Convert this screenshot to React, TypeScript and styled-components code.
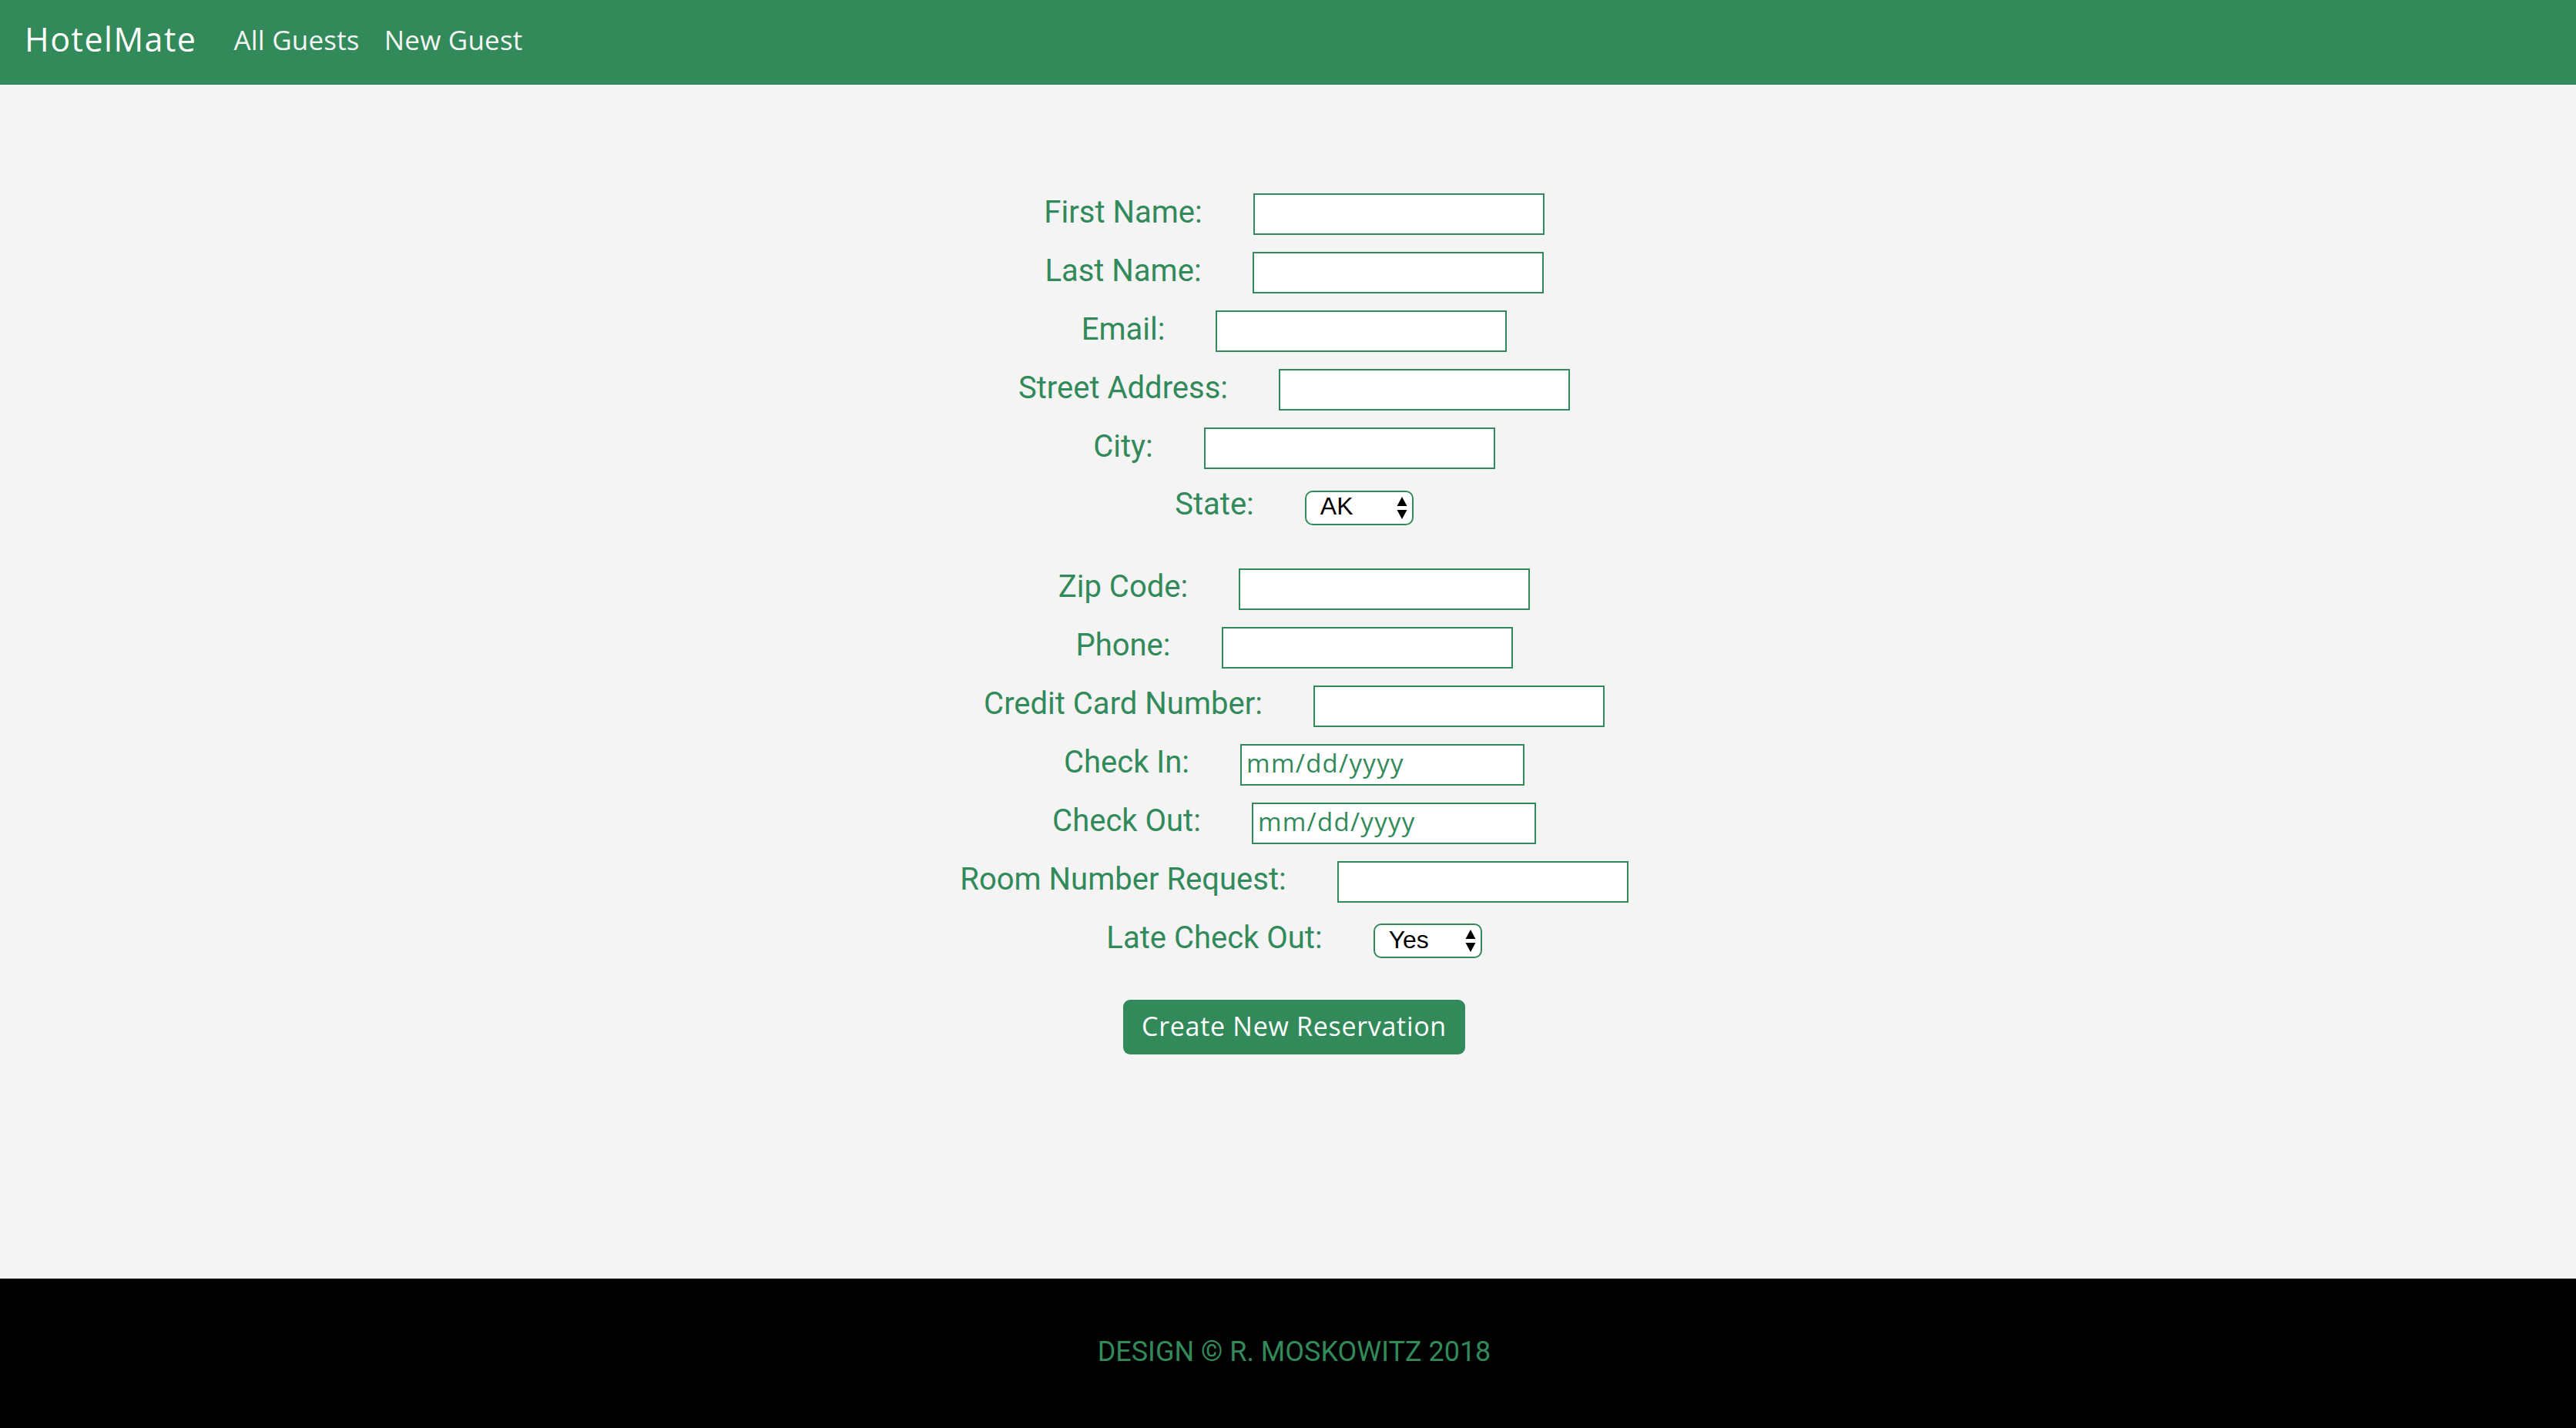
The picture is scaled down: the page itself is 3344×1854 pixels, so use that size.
import React from "react";
import styled, { createGlobalStyle } from "styled-components";

const GREEN = "#328a5a";

const GlobalStyle = createGlobalStyle`
  html, body { margin: 0; padding: 0; background: #f4f4f4; }
  body { font-family: "Open Sans", "Noto Sans", sans-serif; }
  * { box-sizing: border-box; }
`;

const Page = styled.div`
  min-height: 100vh;
  display: flex;
  flex-direction: column;
  background: #f4f4f4;
`;

const NavBar = styled.nav`
  height: 110px;
  background: ${GREEN};
  display: flex;
  align-items: center;
  padding: 0 32px;
`;

const Brand = styled.a`
  font-family: "Open Sans", sans-serif;
  font-size: 43px;
  letter-spacing: 1.5px;
  color: #ffffff;
  text-decoration: none;
  margin-right: 32px;
  line-height: 1;
  padding-bottom: 10px;
`;

const NavLink = styled.a`
  font-family: "Open Sans", sans-serif;
  font-size: 35px;
  letter-spacing: 0.2px;
  color: #f4f4f4;
  text-decoration: none;
  padding: 0 16px 8px;
  line-height: 1;
`;

const Main = styled.main`
  flex: 1;
  padding: 141px 0 0 16px;
`;

const Form = styled.form`
  display: flex;
  flex-direction: column;
  gap: 22px;
`;

const Row = styled.div<{ $after?: number }>`
  display: flex;
  justify-content: center;
  align-items: baseline;
  gap: 66px;
  margin-bottom: ${(p) => p.$after ?? 0}px;
`;

const Label = styled.label`
  font-family: Roboto, sans-serif;
  font-size: 40px;
  color: ${GREEN};
  line-height: normal;
`;

const TextInput = styled.input<{ $w?: number }>`
  width: ${(p) => p.$w ?? 378}px;
  height: 54px;
  border: 2px solid ${GREEN};
  background: #ffffff;
  padding: 0 6px 4px;
  font-family: "Open Sans", sans-serif;
  font-size: 33px;
  letter-spacing: 1.3px;
  color: ${GREEN};
  outline: none;
  &::placeholder {
    color: ${GREEN};
    opacity: 1;
  }
`;

const SelectWrap = styled.span`
  position: relative;
  display: inline-block;
`;

const Select = styled.select`
  appearance: none;
  -webkit-appearance: none;
  width: 141px;
  height: 45px;
  border: 2px solid ${GREEN};
  border-radius: 10px;
  background: #ffffff;
  padding: 0 0 4px 18px;
  font-family: "Liberation Sans", Arial, sans-serif;
  font-size: 32px;
  color: #000000;
  outline: none;
`;

const Arrows = styled.svg`
  position: absolute;
  right: 8px;
  top: 8px;
  width: 14px;
  height: 29px;
  pointer-events: none;
`;

const ButtonRow = styled.div`
  display: flex;
  justify-content: center;
  margin-top: 32px;
`;

const SubmitButton = styled.button`
  width: 444px;
  height: 71px;
  background: ${GREEN};
  color: #ffffff;
  border: none;
  border-radius: 9px;
  font-family: "Open Sans", sans-serif;
  font-size: 34px;
  letter-spacing: 0.7px;
  padding: 0 0 4px;
  cursor: pointer;
`;

const Footer = styled.footer`
  height: 194px;
  background: #000000;
  padding: 74px 0 0 16px;
  text-align: center;
  font-family: Roboto, sans-serif;
  font-size: 36px;
  color: ${GREEN};
  line-height: normal;
`;

const STATES = [
  "AK", "AL", "AR", "AZ", "CA", "CO", "CT", "DE", "FL", "GA", "HI", "IA", "ID", "IL", "IN",
  "KS", "KY", "LA", "MA", "MD", "ME", "MI", "MN", "MO", "MS", "MT", "NC", "ND", "NE", "NH",
  "NJ", "NM", "NV", "NY", "OH", "OK", "OR", "PA", "RI", "SC", "SD", "TN", "TX", "UT", "VA",
  "VT", "WA", "WI", "WV", "WY",
];

const UpDown = () => (
  <Arrows viewBox="0 0 14 29">
    <path d="M7 0 L13.5 12 L0.5 12 Z" fill="#000" />
    <path d="M0.5 17 L13.5 17 L7 29 Z" fill="#000" />
  </Arrows>
);

const Dropdown: React.FC<{ id: string; options: string[] }> = ({ id, options }) => (
  <SelectWrap>
    <Select id={id} defaultValue={options[0]}>
      {options.map((o) => (
        <option key={o} value={o}>
          {o}
        </option>
      ))}
    </Select>
    <UpDown />
  </SelectWrap>
);

type TextField = { id: string; label: string; placeholder?: string; w?: number };

const FIRST: TextField[] = [
  { id: "firstName", label: "First Name:" },
  { id: "lastName", label: "Last Name:" },
  { id: "email", label: "Email:" },
  { id: "street", label: "Street Address:" },
  { id: "city", label: "City:" },
];

const SECOND: TextField[] = [
  { id: "zip", label: "Zip Code:" },
  { id: "phone", label: "Phone:" },
  { id: "card", label: "Credit Card Number:" },
  { id: "checkIn", label: "Check In:", placeholder: "mm/dd/yyyy", w: 369 },
  { id: "checkOut", label: "Check Out:", placeholder: "mm/dd/yyyy", w: 369 },
  { id: "room", label: "Room Number Request:" },
];

const renderField = (f: TextField) => (
  <Row key={f.id}>
    <Label htmlFor={f.id}>{f.label}</Label>
    <TextInput id={f.id} type="text" placeholder={f.placeholder} $w={f.w} />
  </Row>
);

export default function App() {
  return (
    <Page>
      <GlobalStyle />
      <NavBar>
        <Brand href="#">HotelMate</Brand>
        <NavLink href="#">All Guests</NavLink>
        <NavLink href="#">New Guest</NavLink>
      </NavBar>
      <Main>
        <Form onSubmit={(e) => e.preventDefault()}>
          {FIRST.map(renderField)}
          <Row $after={34}>
            <Label htmlFor="state">State:</Label>
            <Dropdown id="state" options={STATES} />
          </Row>
          {SECOND.map(renderField)}
          <Row>
            <Label htmlFor="late">Late Check Out:</Label>
            <Dropdown id="late" options={["Yes", "No"]} />
          </Row>
          <ButtonRow>
            <SubmitButton type="submit">Create New Reservation</SubmitButton>
          </ButtonRow>
        </Form>
      </Main>
      <Footer>DESIGN © R. MOSKOWITZ 2018</Footer>
    </Page>
  );
}
